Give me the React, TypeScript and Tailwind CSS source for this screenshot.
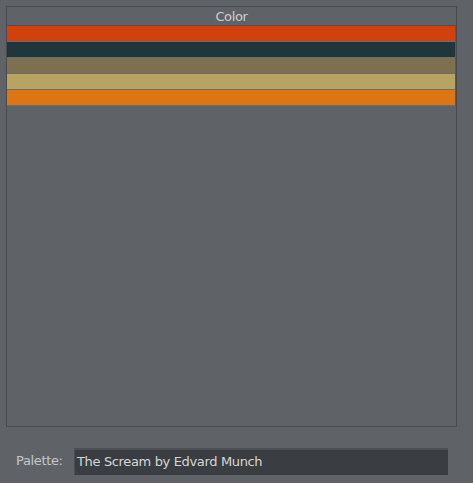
import React from "react";

const colors = ["#d2410c", "#1f363d", "#7e704e", "#b8a460", "#dc7512"];

export default function App() {
  return (
    <div
      className="w-[473px] h-[483px] bg-[#5f6367] pt-[6px] px-[6px] text-[13px] tracking-[-0.35px] text-[#d2d2d2]"
      style={{ fontFamily: '"DejaVu Sans", sans-serif' }}
    >
      <div className="w-[451px] h-[421px] border border-[#474a4e] flex flex-col">
        <div className="h-[19px] border-b border-[#4d5054] flex items-center justify-center leading-none pt-[1px] text-[#cfcfcf]">
          Color
        </div>
        <div className="flex flex-col border-r border-[#55585c]">
          {colors.map((c) => (
            <div key={c} className="h-[16px] border-b border-[#6a6d70]">
              <div className="h-[15px]" style={{ backgroundColor: c }} />
            </div>
          ))}
        </div>
      </div>
      <div className="flex items-center mt-[21px]">
        <span className="w-[68px] pl-[10px] pb-[2px] text-[#c4c6c8]">Palette:</span>
        <div className="w-[374px] h-[27px] bg-[#3a3e42] border-t-2 border-l border-[#4b4f53] flex items-center pl-[2px] pb-[2px] text-[#d6d6d6]">
          The Scream by Edvard Munch
        </div>
      </div>
    </div>
  );
}
